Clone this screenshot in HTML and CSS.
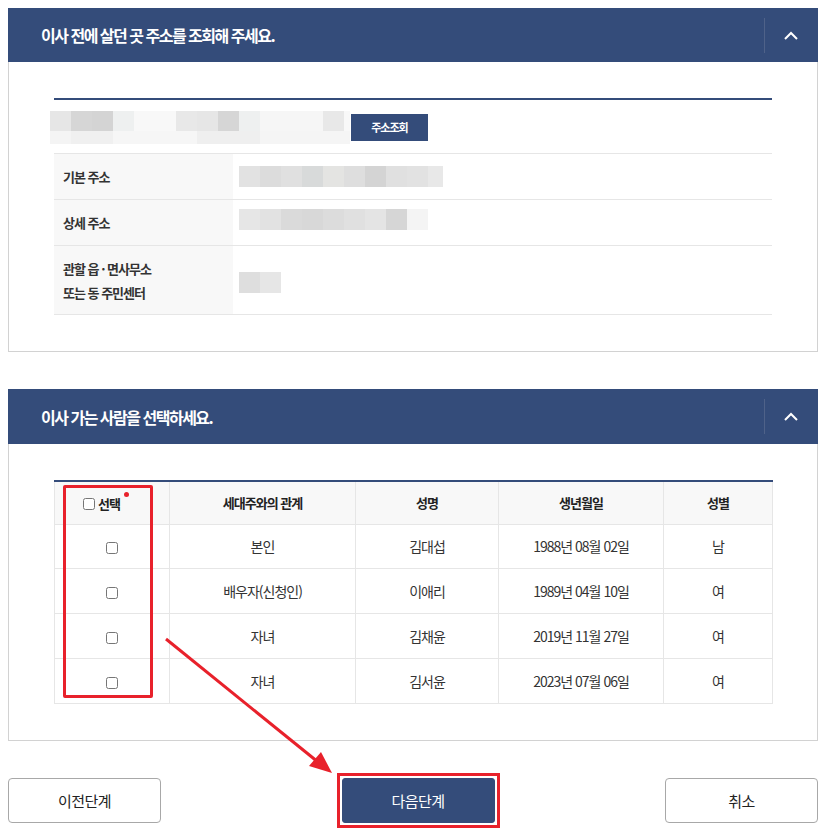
FILE: index.html
```html
<!DOCTYPE html>
<html lang="ko">
<head>
<meta charset="utf-8">
<title>전입신고</title>
<link rel="stylesheet" href="styles.css">
</head>
<body>
<div class="page">
  <section class="panel">
    <div class="panel-head">
      <h2 class="panel-title">이사 전에 살던 곳 주소를 조회해 주세요.</h2>
      <div class="panel-toggle">
        <svg width="14" height="9" viewBox="0 0 14 9"><polyline points="1,8 7,2 13,8" fill="none" stroke="#fff" stroke-width="2"/></svg>
      </div>
    </div>
    <div class="panel-body">
      <div class="search-row">
        <div class="mosaic m-search"></div>
        <button class="btn-search" type="button">주소조회</button>
      </div>
      <table class="info-table">
        <tr class="r1">
          <th>기본 주소</th>
          <td><div class="mosaic m-base"></div></td>
        </tr>
        <tr class="r2">
          <th>상세 주소</th>
          <td><div class="mosaic m-detail"></div></td>
        </tr>
        <tr class="r3">
          <th>관할 읍 · 면사무소<br>또는 동 주민센터</th>
          <td><div class="mosaic m-office"></div></td>
        </tr>
      </table>
    </div>
  </section>

  <section class="panel panel-second">
    <div class="panel-head">
      <h2 class="panel-title">이사 가는 사람을 선택하세요.</h2>
      <div class="panel-toggle">
        <svg width="14" height="9" viewBox="0 0 14 9"><polyline points="1,8 7,2 13,8" fill="none" stroke="#fff" stroke-width="2"/></svg>
      </div>
    </div>
    <div class="panel-body panel-body-tight">
      <div class="table-wrap">
        <table class="member-table">
          <colgroup>
            <col class="c1"><col class="c2"><col class="c3"><col class="c4"><col class="c5">
          </colgroup>
          <thead>
            <tr>
              <th class="sel"><label class="sel-label"><input type="checkbox">선택</label><span class="req-dot"></span></th>
              <th>세대주와의 관계</th>
              <th>성명</th>
              <th>생년월일</th>
              <th>성별</th>
            </tr>
          </thead>
          <tbody>
            <tr class="first"><td><input type="checkbox"></td><td>본인</td><td>김대섭</td><td>1988년 08월 02일</td><td>남</td></tr>
            <tr><td><input type="checkbox"></td><td>배우자(신청인)</td><td>이애리</td><td>1989년 04월 10일</td><td>여</td></tr>
            <tr><td><input type="checkbox"></td><td>자녀</td><td>김채윤</td><td>2019년 11월 27일</td><td>여</td></tr>
            <tr><td><input type="checkbox"></td><td>자녀</td><td>김서윤</td><td>2023년 07월 06일</td><td>여</td></tr>
          </tbody>
        </table>
        <div class="mark-box"></div>
      </div>
    </div>
  </section>

  <div class="actions">
    <button class="btn" type="button">이전단계</button>
    <span class="btn-mark"><button class="btn btn-primary" type="button">다음단계</button></span>
    <button class="btn" type="button">취소</button>
  </div>

  <svg class="arrow" width="827" height="836" viewBox="0 0 827 836">
    <line x1="166" y1="639" x2="318" y2="762" stroke="#e8212b" stroke-width="3"/>
    <polygon points="332,773 309,766 321,752" fill="#e8212b"/>
  </svg>
</div>
</body>
</html>
```

FILE: styles.css
```css
* { box-sizing: border-box; }

html, body {
  margin: 0;
  padding: 0;
  background: #fff;
}

body {
  font-family: "Noto Sans CJK KR", "Noto Sans", sans-serif;
  color: #333;
}

.page {
  position: relative;
  width: 827px;
  height: 836px;
  padding: 8px 9px 0 8px;
  overflow: hidden;
}

.panel {
  width: 810px;
}

.panel-second {
  margin-top: 37px;
}

.panel-head {
  height: 54px;
  background: #344c7a;
  display: flex;
  align-items: center;
  justify-content: space-between;
}

.panel-second .panel-head {
  height: 55px;
}

.panel-title {
  margin: 0 0 0 33px;
  font-size: 16px;
  font-weight: 700;
  letter-spacing: -1.5px;
  color: #fff;
  line-height: 20px;
}

.panel-toggle {
  width: 54px;
  height: 35px;
  border-left: 1px solid #4f6289;
  display: flex;
  align-items: center;
  justify-content: center;
  padding-right: 2px;
}

.panel-body {
  border: 1px solid #d2d2d2;
  border-top: 0;
  padding: 36px 45px 36px 45px;
}

.panel-body-tight {
  padding-bottom: 36px;
}

/* search row */
.search-row {
  border-top: 2px solid #344c7a;
  height: 55px;
  display: flex;
  align-items: center;
  padding-top: 1px;
}

.mosaic {
  height: 21px;
}

.m-search {
  width: 300px;
  height: 33px;
  margin-left: -4px;
  background:
    linear-gradient(to right,
      #e6e6e6 0 21px, #d6d6d6 21px 42px, #d4d4d4 42px 63px, #eef0f0 63px 84px,
      #f8f8f8 84px 126px, #e8e8e8 126px 147px, #e6e6e6 147px 168px, #d6d6d6 168px 189px,
      #eef0f0 189px 210px, #f6f6f6 210px 273px, #e8e8e8 273px 294px, #f8f8f8 294px 300px) top left / 100% 20px no-repeat,
    linear-gradient(to right,
      #f4f4f4 0 21px, #f0f0f0 21px 63px, #f6f6f6 63px 147px, #efefef 147px 210px, #f5f5f5 210px 300px) bottom left / 100% 13px no-repeat;
}

.btn-search {
  margin-left: 1px;
  width: 77px;
  height: 27px;
  border: 0;
  background: #344c7a;
  color: #fff;
  font-family: inherit;
  font-size: 11px;
  font-weight: 700;
  letter-spacing: -1px;
  padding: 0;
}

.info-table {
  width: 718px;
  border-collapse: collapse;
}

.info-table th,
.info-table td {
  border-top: 1px solid #e6e6e6;
  border-bottom: 1px solid #e6e6e6;
  padding: 0;
}

.info-table th {
  width: 179px;
  background: #f8f8f8;
  text-align: left;
  padding-left: 9px;
  font-size: 13px;
  font-weight: 700;
  letter-spacing: -1px;
  color: #333;
  line-height: 24px;
}

.info-table td {
  padding-left: 6px;
}

.info-table .r1 th, .info-table .r1 td { height: 46px; }
.info-table .r2 th, .info-table .r2 td { height: 46px; }
.info-table .r3 th, .info-table .r3 td { height: 69px; padding-top: 1px; }

.m-base {
  width: 204px;
  background: linear-gradient(to right,
    #e2e2e2 0 21px, #dcdcdc 21px 42px, #e0e0e0 42px 63px, #d8dada 63px 84px,
    #e4e4e2 84px 105px, #dedede 105px 126px, #d4d4d4 126px 147px, #e0e0e0 147px 168px,
    #e2e2e2 168px 189px, #e8e8e8 189px 204px);
}

.m-detail {
  width: 189px;
  margin-top: -6px;
  background: linear-gradient(to right,
    #e6e6e6 0 21px, #e2e2e2 21px 42px, #dadada 42px 63px, #d8d8d8 63px 84px,
    #dcdcdc 84px 105px, #e0e0e0 105px 126px, #e4e4e4 126px 147px, #d6d6d6 147px 168px,
    #f4f4f4 168px 189px);
}

.m-office {
  width: 42px;
  margin-top: 4px;
  background: linear-gradient(to right, #dedede 0 21px, #e6e6e6 21px 42px);
}

/* member table */
.table-wrap {
  position: relative;
  width: 718px;
}

.member-table {
  width: 718px;
  border-collapse: collapse;
  table-layout: fixed;
  border-top: 2px solid #344c7a;
}

.c1 { width: 115px; }
.c2 { width: 186px; }
.c3 { width: 143px; }
.c4 { width: 165px; }
.c5 { width: 109px; }

.member-table th,
.member-table td {
  border: 1px solid #e6e6e6;
  text-align: center;
  padding: 0;
}

.member-table thead th {
  border-top: 0;
  height: 43px;
  background: #f8f8f8;
  font-size: 13px;
  font-weight: 700;
  letter-spacing: -1px;
  color: #222;
}

.member-table tbody td {
  height: 45px;
  font-size: 14px;
  letter-spacing: -1px;
  color: #333;
}

.member-table tbody tr.first td {
  height: 44px;
}

.member-table input[type="checkbox"] {
  margin: 0;
  width: 12px;
  height: 12px;
  vertical-align: middle;
}

.member-table th.sel {
  text-align: left;
  padding-left: 28px;
}

.sel-label {
  display: inline-flex;
  align-items: center;
  gap: 3px;
}

.req-dot {
  display: inline-block;
  width: 5px;
  height: 5px;
  border-radius: 50%;
  background: #e8212b;
  margin-left: 4px;
  vertical-align: 13px;
}

.mark-box {
  position: absolute;
  left: 9px;
  top: 5px;
  width: 90px;
  height: 213px;
  border: 3px solid #e8212b;
  border-radius: 2px;
}

/* actions */
.actions {
  margin-top: 37px;
  width: 810px;
  display: flex;
  justify-content: space-between;
  align-items: center;
}

.btn {
  width: 153px;
  height: 45px;
  border: 1px solid #a8a8a8;
  border-radius: 4px;
  background: #fff;
  color: #222;
  font-family: inherit;
  font-size: 15px;
  letter-spacing: -0.5px;
  padding: 0;
  display: block;
}

.btn-mark {
  display: block;
  margin: -5px -5px -5px 5px;
  padding: 2px;
  border: 3px solid #e8212b;
}

.btn-primary {
  background: #344c7a;
  border-color: #344c7a;
  border-radius: 3px;
  color: #fff;
}

.arrow {
  position: absolute;
  left: 0;
  top: 0;
  pointer-events: none;
}
```
